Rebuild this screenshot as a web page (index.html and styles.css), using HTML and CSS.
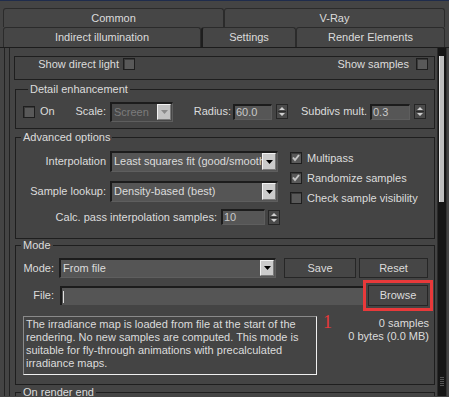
FILE: index.html
```html
<!DOCTYPE html>
<html lang="en">
<head>
    <meta charset="UTF-8">
    <title>V-Ray Indirect illumination</title>
    <link rel="stylesheet" href="styles.css">
</head>
<body>
<div class="window">
    <div class="tabs">
        <div class="tab-row">
            <div class="tab tab-common">Common</div>
            <div class="tab tab-grow">V-Ray</div>
        </div>
        <div class="tab-row tab-row-2">
            <div class="tab tab-indirect">Indirect illumination</div>
            <div class="tab tab-settings">Settings</div>
            <div class="tab tab-grow">Render Elements</div>
        </div>
    </div>

    <div class="panel">
        <div class="gutter"></div>
        <div class="content">
            <!-- rollout scrolled, only last row visible -->
            <div class="box show-row">
                <span class="lbl lbl-direct">Show direct light</span>
                <span class="chk chk-direct"></span>
                <span class="spacer"></span>
                <span class="lbl">Show samples</span>
                <span class="chk chk-samples"></span>
            </div>

            <fieldset class="group group-detail">
                <legend>Detail enhancement</legend>
                <div class="row detail-row">
                    <span class="chk"></span>
                    <span class="lbl lbl-on">On</span>
                    <span class="lbl lbl-scale">Scale:</span>
                    <div class="dd dd-disabled dd-scale">
                        <span class="dd-text">Screen</span>
                        <span class="dd-arrow"><svg width="7" height="4" viewBox="0 0 7 4"><path d="M0 0h7L3.5 4z" fill="#8a8a8a"/></svg></span>
                    </div>
                    <span class="lbl lbl-radius">Radius:</span>
                    <span class="num num-radius">60.0</span>
                    <span class="spin"><svg width="12" height="15" viewBox="0 0 12 15"><path d="M6 3l3 3H3z M3 9h6l-3 3z" fill="#d0d0d0"/><path d="M2 7.5h8" stroke="#2a2a2a"/></svg></span>
                    <span class="lbl lbl-subdivs">Subdivs mult.</span>
                    <span class="num num-subdivs">0.3</span>
                    <span class="spin"><svg width="12" height="15" viewBox="0 0 12 15"><path d="M6 3l3 3H3z M3 9h6l-3 3z" fill="#d0d0d0"/><path d="M2 7.5h8" stroke="#2a2a2a"/></svg></span>
                </div>
            </fieldset>

            <fieldset class="group group-advanced">
                <legend>Advanced options</legend>
                <div class="adv">
                    <div class="adv-left">
                        <div class="row adv-row-1">
                            <span class="lbl lbl-adv">Interpolation</span>
                            <div class="dd dd-wide">
                                <span class="dd-text">Least squares fit (good/smooth)</span>
                                <span class="dd-arrow"><svg width="7" height="4" viewBox="0 0 7 4"><path d="M0 0h7L3.5 4z" fill="#000"/></svg></span>
                            </div>
                        </div>
                        <div class="row adv-row-2">
                            <span class="lbl lbl-adv">Sample lookup:</span>
                            <div class="dd dd-wide">
                                <span class="dd-text">Density-based (best)</span>
                                <span class="dd-arrow"><svg width="7" height="4" viewBox="0 0 7 4"><path d="M0 0h7L3.5 4z" fill="#000"/></svg></span>
                            </div>
                        </div>
                        <div class="row adv-row-3">
                            <span class="lbl lbl-calc">Calc. pass interpolation samples:</span>
                            <span class="num num-calc">10</span>
                            <span class="spin spin-calc"><svg width="12" height="15" viewBox="0 0 12 15"><path d="M6 3l3 3H3z M3 9h6l-3 3z" fill="#d0d0d0"/><path d="M2 7.5h8" stroke="#2a2a2a"/></svg></span>
                        </div>
                    </div>
                    <div class="adv-right">
                        <div class="check-row"><span class="chk checked"><svg width="10" height="10" viewBox="0 0 10 10"><path d="M2 4.5l2 2.5 4-5" fill="none" stroke="#c4c4c4" stroke-width="2"/></svg></span>Multipass</div>
                        <div class="check-row"><span class="chk checked"><svg width="10" height="10" viewBox="0 0 10 10"><path d="M2 4.5l2 2.5 4-5" fill="none" stroke="#c4c4c4" stroke-width="2"/></svg></span>Randomize samples</div>
                        <div class="check-row"><span class="chk"></span>Check sample visibility</div>
                    </div>
                </div>
            </fieldset>

            <fieldset class="group group-mode">
                <legend>Mode</legend>
                <div class="row mode-row">
                    <span class="lbl lbl-mode">Mode:</span>
                    <div class="dd dd-mode">
                        <span class="dd-text">From file</span>
                        <span class="dd-arrow"><svg width="7" height="4" viewBox="0 0 7 4"><path d="M0 0h7L3.5 4z" fill="#000"/></svg></span>
                    </div>
                    <span class="btn btn-save">Save</span>
                    <span class="btn btn-reset">Reset</span>
                </div>
                <div class="row file-row">
                    <span class="lbl lbl-mode">File:</span>
                    <span class="file-input"><span class="caret"></span></span>
                    <span class="btn btn-browse">Browse</span>
                </div>
                <div class="row info-row">
                    <div class="desc">The irradiance map is loaded from file at the start of the<br>rendering. No new samples are computed. This mode is<br>suitable for fly-through animations with precalculated<br>irradiance maps.</div>
                    <div class="counts">
                        <div>0 samples</div>
                        <div>0 bytes (0.0 MB)</div>
                    </div>
                </div>
                <span class="mark">1</span>
            </fieldset>

            <fieldset class="group group-end">
                <legend>On render end</legend>
                <div class="end-body"></div>
            </fieldset>
        </div>
        <div class="scrollbar">
            <div class="thumb"></div>
            <div class="grip"></div>
        </div>
    </div>
</div>
</body>
</html>
```

FILE: styles.css
```css
* {
    box-sizing: border-box;
}
body {
    margin: 0;
    width: 449px;
    height: 397px;
    overflow: hidden;
    background-color: #444;
    font-family: "Liberation Sans", Arial, sans-serif;
    font-size: 11px;
    color: #dcdcdc;
}
.window {
    border-top: 1px solid #1f2c4c;
}

/* tabs */
.tabs {
    padding: 7px 4px 0 3px;
}
.tab-row {
    display: flex;
    height: 19px;
}
.tab-row-2 {
    height: 20px;
}
.tab {
    border: 1px solid #2b2b2b;
    border-bottom: none;
    border-radius: 3px 3px 0 0;
    text-align: center;
    line-height: 18px;
    background-color: #464646;
    white-space: nowrap;
}
.tab-common {
    width: 221px;
}
.tab-indirect {
    width: 198px;
}
.tab-settings {
    width: 95px;
    border-left: 2px solid #1e1e1e;
}
.tab-grow {
    flex: 1;
}

/* panel */
.panel {
    display: flex;
    height: 349px;
    border-top: 1px solid #1c1c1c;
    overflow: hidden;
}
.gutter {
    margin-left: 4px;
    width: 6px;
    border-left: 1px solid #222;
    border-right: 1px solid #222;
}
.content {
    width: 427px;
    padding: 8px 2px 0 4px;
}
.box {
    border: 1px solid #1e1e1e;
    height: 24px;
}
.show-row {
    display: flex;
    align-items: flex-start;
    padding-top: 1px;
}
.lbl {
    white-space: nowrap;
    line-height: 13px;
}
.lbl-direct {
    width: 104px;
    text-align: right;
}
.chk {
    width: 12px;
    height: 12px;
    flex: none;
    background-color: #595959;
    border: 1px solid #1e1e1e;
    box-shadow: inset 1px 1px #3a3a3a;
    display: flex;
    align-items: center;
    justify-content: center;
}
.chk-direct {
    margin-left: 4px;
}
.spacer {
    flex: 1;
}
.chk-samples {
    margin-left: 7px;
    margin-right: 6px;
}

/* group boxes */
.group {
    margin: 3px 0 0 1px;
    padding: 0;
    width: 420px;
    min-width: 0;
    border: 1px solid #1e1e1e;
    position: relative;
}
.group legend {
    margin-left: 5px;
    padding: 0 2px;
    line-height: 13px;
}
.row {
    display: flex;
    align-items: center;
}
.group-detail {
    padding: 5px 0 6px 7px;
}
.detail-row {
    height: 21px;
}
.lbl-on {
    margin-left: 5px;
    width: 30px;
}
.lbl-scale {
    width: 36px;
    text-align: right;
}
.lbl-radius {
    width: 58px;
    text-align: right;
}
.lbl-subdivs {
    width: 79px;
    text-align: right;
}

/* dropdowns */
.dd {
    display: flex;
    height: 21px;
    background-color: #555;
    border-top: 2px solid #1c1c1c;
    border-left: 2px solid #1c1c1c;
    border-right: 1px solid #5e5e5e;
    border-bottom: 1px solid #5e5e5e;
}
.dd-text {
    flex: 1;
    overflow: hidden;
    white-space: nowrap;
    padding-left: 2px;
    line-height: 17px;
}
.dd-arrow {
    width: 14px;
    margin: 0 1px 1px 0;
    background-color: #cbcbcb;
    border: 1px solid;
    border-color: #f2f2f2 #7a7a7a #7a7a7a #f2f2f2;
    display: flex;
    align-items: center;
    justify-content: center;
}
.dd-disabled {
    background-color: #484848;
    color: #7c7c7c;
}
.dd-disabled .dd-arrow {
    background-color: #c2c2c2;
}
.dd-scale {
    margin-left: 4px;
    width: 63px;
    height: 20px;
}
.dd-wide {
    margin-left: 4px;
    width: 168px;
}
.dd-mode {
    margin-left: 5px;
    width: 217px;
    height: 20px;
}

/* number fields + spinners */
.num {
    height: 16px;
    background-color: #565656;
    border-top: 2px solid #1c1c1c;
    border-left: 2px solid #1c1c1c;
    border-right: 1px solid #5e5e5e;
    border-bottom: 1px solid #5e5e5e;
    color: #c8c8c8;
    padding-left: 1px;
    line-height: 12px;
}
.num-radius {
    margin-left: 2px;
    width: 39px;
}
.num-subdivs {
    margin-left: 3px;
    width: 40px;
}
.spin {
    margin-left: 4px;
    width: 12px;
    height: 15px;
    border: 1px solid #262626;
    background-color: #4a4a4a;
    display: flex;
}
.spin svg {
    margin: -1px;
}

/* advanced options */
.group-advanced {
    margin-top: 2px;
    padding: 0 0 13px 0;
}
.adv {
    display: flex;
}
.adv-left {
    width: 264px;
}
.adv-row-1 {
    margin-top: 7px;
}
.adv-row-2 {
    margin-top: 9px;
}
.adv-row-3 {
    margin-top: 7px;
    height: 16px;
}
.lbl-adv {
    width: 90px;
    text-align: right;
}
.lbl-calc {
    width: 201px;
    text-align: right;
}
.num-calc {
    margin-left: 4px;
    width: 44px;
}
.spin-calc {
    margin-left: 3px;
}
.adv-right {
    margin-left: 10px;
    padding-top: 4px;
}
.check-row {
    display: flex;
    align-items: center;
    height: 20px;
    gap: 5px;
    white-space: nowrap;
}

/* mode */
.group-mode {
    margin-top: 0;
    padding: 6px 0 9px 0;
}
.lbl-mode {
    width: 38px;
    text-align: right;
}
.btn {
    height: 20px;
    border: 1px solid #262626;
    background-color: #464646;
    text-align: center;
    line-height: 18px;
}
.btn-save {
    margin-left: 8px;
    width: 72px;
}
.btn-reset {
    margin-left: 3px;
    width: 69px;
}
.file-row {
    margin-top: 7px;
    height: 21px;
}
.file-input {
    margin-left: 6px;
    width: 305px;
    height: 19px;
    background-color: #555;
    border-top: 2px solid #1c1c1c;
    border-left: 2px solid #1c1c1c;
    display: flex;
    align-items: center;
}
.caret {
    margin-left: 1px;
    height: 12px;
    border-left: 1px solid #e0e0e0;
}
.btn-browse {
    margin-left: 3px;
    width: 60px;
    height: 21px;
    line-height: 19px;
    outline: 3px solid #e8393a;
    outline-offset: 2px;
}
.info-row {
    margin-top: 10px;
    align-items: flex-start;
}
.desc {
    margin-left: 7px;
    width: 294px;
    height: 59px;
    padding: 1px 2px;
    line-height: 13px;
    white-space: nowrap;
    border-top: 1px solid #8a8a8a;
    border-left: 1px solid #8a8a8a;
    border-right: 1px solid #f0f0f0;
    border-bottom: 1px solid #f0f0f0;
}
.counts {
    flex: 1;
    text-align: right;
    padding-right: 5px;
    line-height: 13px;
    padding-top: 1px;
}
.mark {
    position: absolute;
    left: 307px;
    top: 60px;
    font-family: "Liberation Serif", serif;
    font-size: 18px;
    color: #e8393a;
}

.group-end {
    margin-top: 1px;
}
.end-body {
    height: 40px;
}

/* scrollbar */
.scrollbar {
    width: 10px;
    background-color: #161616;
    border-left: 1px solid #2a2a2a;
    border-right: 1px solid #333;
    padding-top: 8px;
}
.thumb {
    margin-left: 1px;
    width: 5px;
    height: 146px;
    background-color: #bdbdbd;
    border-left: 1px solid #e2e2e2;
}
.grip {
    margin: 175px 0 0 2px;
    width: 4px;
    height: 9px;
    background: repeating-linear-gradient(#555 0 1px, transparent 1px 2px);
}
```
